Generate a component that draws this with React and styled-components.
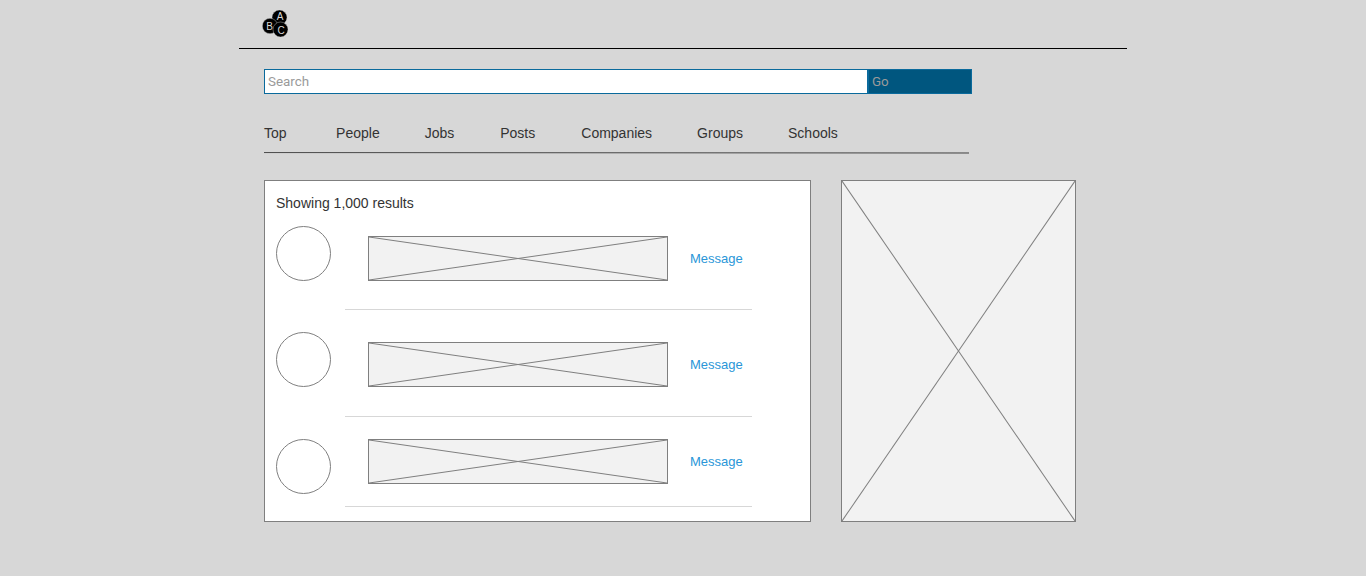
import React from "react";
import styled, { createGlobalStyle } from "styled-components";

const tabs = [
  { label: "Top", gap: 49.5 },
  { label: "People", gap: 45 },
  { label: "Jobs", gap: 46 },
  { label: "Posts", gap: 46 },
  { label: "Companies", gap: 45 },
  { label: "Groups", gap: 45 },
  { label: "Schools", gap: 0 },
];

const results = [
  { thumbTop: 10, height: 84, message: 22 },
  { thumbTop: 10, height: 85, message: 22 },
  { thumbTop: 0, height: 68, message: 12 },
];

const Logo = () => (
  <LogoMark width="30" height="32" viewBox="0 0 30 32">
    <circle cx="18.5" cy="9.5" r="7.5" fill="#000" stroke="#d7d7d7" strokeWidth="0.4" />
    <circle cx="9" cy="18" r="7.7" fill="#000" stroke="#d7d7d7" strokeWidth="0.4" />
    <circle cx="19.5" cy="21.5" r="7.5" fill="#000" stroke="#d7d7d7" strokeWidth="0.4" />
    <LogoText x="19" y="12">A</LogoText>
    <LogoText x="8.5" y="21.5">B</LogoText>
    <LogoText x="20" y="25.5">C</LogoText>
  </LogoMark>
);

const Crossed = () => (
  <CrossLines viewBox="0 0 100 100" preserveAspectRatio="none">
    <line x1="0" y1="0" x2="100" y2="100" vectorEffect="non-scaling-stroke" />
    <line x1="100" y1="0" x2="0" y2="100" vectorEffect="non-scaling-stroke" />
  </CrossLines>
);

const App = () => {
  return (
    <Page>
      <GlobalStyle />
      <Header>
        <Logo />
      </Header>
      <Content>
        <SearchBar>
          <SearchInput placeholder="Search" readOnly />
          <GoButton>Go</GoButton>
        </SearchBar>
        <TabBar>
          {tabs.map((tab) => (
            <Tab key={tab.label} $gap={tab.gap}>
              {tab.label}
            </Tab>
          ))}
        </TabBar>
        <Columns>
          <ResultsPanel>
            <Showing>Showing 1,000 results</Showing>
            {results.map((result, index) => (
              <ResultRow key={index} $height={result.height}>
                <Avatar />
                <Thumb $top={result.thumbTop}>
                  <Crossed />
                </Thumb>
                <MessageLink $top={result.message}>Message</MessageLink>
              </ResultRow>
            ))}
          </ResultsPanel>
          <SideAd>
            <Crossed />
          </SideAd>
        </Columns>
      </Content>
    </Page>
  );
};

// Styled Components
const GlobalStyle = createGlobalStyle`
  html, body {
    margin: 0;
    padding: 0;
    background: #d7d7d7;
  }
  body {
    font-family: "Liberation Sans", Arial, sans-serif;
    color: #333;
  }
`;

const Page = styled.div`
  width: 888px;
  height: 576px;
  margin-left: 239px;
  overflow: hidden;
`;

const Header = styled.header`
  height: 48px;
  box-sizing: content-box;
  border-bottom: 1px solid #000;
  padding-left: 22px;
`;

const LogoMark = styled.svg`
  display: block;
  padding-top: 8px;
`;

const LogoText = styled.text`
  fill: #d7d7d7;
  font-family: "Liberation Sans", sans-serif;
  font-size: 10px;
  text-anchor: middle;
`;

const Content = styled.main`
  padding: 20px 0 0 25px;
`;

const SearchBar = styled.div`
  display: flex;
  width: 708px;
  height: 25px;
`;

const SearchInput = styled.input`
  box-sizing: border-box;
  width: 604px;
  height: 25px;
  margin: 0;
  padding: 0 3px 1px;
  background: #fff;
  border: 1px solid #0a6a9c;
  border-radius: 0;
  outline: none;
  font-family: "Roboto", "Liberation Sans", sans-serif;
  font-size: 13.4px;

  &::placeholder {
    color: #9a9a9a;
    opacity: 1;
  }
`;

const GoButton = styled.div`
  box-sizing: border-box;
  width: 104px;
  height: 25px;
  padding: 0 3px;
  background: #00567f;
  border: 1px solid #0a6a9c;
  color: #9a9a9a;
  font-family: "Roboto", "Liberation Sans", sans-serif;
  font-size: 13.4px;
  line-height: 23px;
`;

// the rule in the reference is drawn very slightly off level, so it goes
// from one dark row on the left to two softer rows on the right
const TabBar = styled.nav`
  display: flex;
  box-sizing: border-box;
  width: 705px;
  height: 30px;
  margin-top: 30px;
  background-image: linear-gradient(to right, #505050, #888),
    linear-gradient(to right, #d0d0d0, #8c8c8c);
  background-repeat: no-repeat;
  background-size: 100% 1px;
  background-position: 0 28px, 0 29px;
`;

const Tab = styled.span`
  margin-right: ${(props) => props.$gap}px;
  font-size: 14px;
  line-height: 16px;
  padding-top: 1px;
  color: #333;
`;

const Columns = styled.div`
  display: flex;
  align-items: flex-start;
  gap: 30px;
  margin-top: 26px;
`;

const ResultsPanel = styled.section`
  box-sizing: border-box;
  width: 547px;
  height: 342px;
  padding: 14px 11px 0;
  background: #fff;
  border: 1px solid #7f7f7f;
`;

const Showing = styled.div`
  height: 16px;
  margin-bottom: 15px;
  font-size: 14px;
  line-height: 16px;
  color: #333;
`;

const ResultRow = styled.div`
  position: relative;
  display: flex;
  align-items: flex-start;
  box-sizing: border-box;
  width: 476px;
  height: ${(props) => props.$height}px;
  margin-bottom: ${(props) => (props.$height === 68 ? 0 : 22)}px;

  &::after {
    content: "";
    position: absolute;
    left: 69px;
    right: 0;
    bottom: 0;
    height: 1px;
    background: #d7d7d7;
  }
`;

const Avatar = styled.div`
  box-sizing: border-box;
  flex: none;
  width: 55px;
  height: 55px;
  background: #fff;
  border: 1px solid #7f7f7f;
  border-radius: 50%;
`;

const Thumb = styled.div`
  box-sizing: border-box;
  flex: none;
  width: 300px;
  height: 45px;
  margin: ${(props) => props.$top}px 0 0 37px;
  background: #f2f2f2;
  border: 1px solid #7f7f7f;
`;

const CrossLines = styled.svg`
  display: block;
  width: 100%;
  height: 100%;
  stroke: #7f7f7f;
  stroke-width: 1px;
`;

const MessageLink = styled.a`
  margin: ${(props) => props.$top}px 0 0 22px;
  font-size: 13px;
  line-height: 21px;
  color: #2a96d8;
`;

const SideAd = styled.aside`
  box-sizing: border-box;
  flex: none;
  width: 235px;
  height: 342px;
  background: #f2f2f2;
  border: 1px solid #7f7f7f;
`;

export default App;
